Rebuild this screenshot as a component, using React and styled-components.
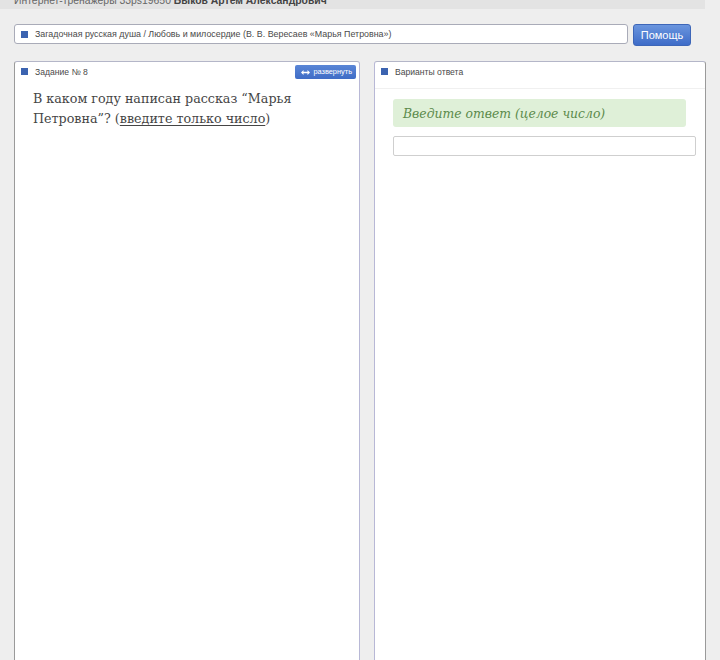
import React from 'react';
import styled, { createGlobalStyle } from 'styled-components';

const Global = createGlobalStyle`
  html, body {
    margin: 0;
    padding: 0;
    background: #eeeeee;
  }
`;

const Page = styled.div`
  width: 720px;
  height: 660px;
  overflow: hidden;
  background: #eeeeee;
  font-family: 'Liberation Sans', Arial, sans-serif;
  color: #444;
`;

const TopBar = styled.div`
  width: 691px;
  height: 9px;
  padding-left: 14px;
  background: #e3e3e3;
  overflow: hidden;
  font-size: 10.4px;
  line-height: 10px;
  color: #666;
  white-space: nowrap;
`;

const TopText = styled.div`
  margin-top: -4px;

  b {
    color: #444;
  }
`;

const Toolbar = styled.div`
  display: flex;
  align-items: flex-start;
  gap: 4px;
  margin-top: 15px;
  padding-left: 14px;
`;

const Crumbs = styled.div`
  width: 606px;
  height: 18px;
  display: flex;
  align-items: center;
  gap: 7px;
  padding-left: 6px;
  background: #fff;
  border: 1px solid #a9abb8;
  border-radius: 3px;
  font-size: 8.9px;
  color: #4a4a4a;
  white-space: nowrap;
`;

const Marker = styled.span`
  width: 7px;
  height: 7px;
  flex: none;
  background: #3b63b0;
`;

const HelpButton = styled.button`
  width: 58px;
  height: 22px;
  margin-left: 1px;
  padding: 0;
  border: 1px solid #3d66b8;
  border-radius: 3px;
  background: linear-gradient(#6a95de, #3e6cc8);
  color: #fff;
  font-family: 'Liberation Sans', Arial, sans-serif;
  font-size: 11px;
`;

const Columns = styled.div`
  display: flex;
  gap: 14px;
  margin-top: 15px;
  padding-left: 14px;
`;

const Panel = styled.div`
  width: ${p => p.$w}px;
  height: 640px;
  flex: none;
  background: #fff;
  border: 1px solid #b4b6c8;
  border-left-color: ${p => p.$leftEdge};
  border-right-color: ${p => p.$rightEdge};
  border-radius: 3px 3px 0 0;
`;

const PanelHead = styled.div`
  height: ${p => p.$h}px;
  display: flex;
  align-items: flex-start;
  gap: 7px;
  padding: 5px 3px 0 6px;
  box-sizing: border-box;
  border-bottom: ${p => (p.$line ? '1px solid #f0f0f0' : 'none')};
  font-size: 8.6px;
  line-height: 10px;
  color: #4a4a4a;

  ${Marker} {
    margin-top: 1px;
  }
`;

const HeadTitle = styled.span`
  flex: 1;
`;

const ExpandButton = styled.span`
  display: flex;
  align-items: center;
  gap: 3px;
  height: 14px;
  padding: 0 4px 0 6px;
  margin-top: -2px;
  background: linear-gradient(#5a86d6, #3f6cc6);
  border-radius: 2px;
  color: #fff;
  font-size: 7.4px;
`;

const Question = styled.p`
  margin: 7px 0 0 18px;
  padding-right: 40px;
  font-family: 'DejaVu Serif', 'Liberation Serif', serif;
  font-size: 12.7px;
  line-height: 19.5px;
  color: #454545;

  u {
    text-decoration-thickness: 1px;
    text-underline-offset: 2px;
  }
`;

const AnswerBody = styled.div`
  padding: 10px 8px 0 18px;
`;

const Hint = styled.div`
  width: 283px;
  height: 28px;
  padding-left: 10px;
  display: flex;
  align-items: center;
  background: #dff0d8;
  border-radius: 3px;
  font-family: 'DejaVu Serif', 'Liberation Serif', serif;
  font-style: italic;
  font-size: 12.4px;
  color: #5b8a4b;
`;

const AnswerInput = styled.input`
  display: block;
  width: 303px;
  height: 20px;
  margin-top: 9px;
  box-sizing: border-box;
  border: 1px solid #cfcfcf;
  border-radius: 2px;
  background: #fff;
`;

const Arrows = () => (
  <svg width="9" height="5" viewBox="0 0 9 5">
    <path d="M0 2.5 L2.5 0 V1.7 H6.5 V0 L9 2.5 L6.5 5 V3.3 H2.5 V5 Z" fill="#fff" />
  </svg>
);

export default function App() {
  return (
    <Page>
      <Global />
      <TopBar>
        <TopText>
          Интернет-тренажеры 33ps19650 <b>Быков Артем Александрович</b>
        </TopText>
      </TopBar>
      <Toolbar>
        <Crumbs>
          <Marker />
          Загадочная русская душа / Любовь и милосердие (В. В. Вересаев «Марья Петровна»)
        </Crumbs>
        <HelpButton>Помощь</HelpButton>
      </Toolbar>
      <Columns>
        <Panel $w={344} $leftEdge="#9a9a9a" $rightEdge="#b8b8d6">
          <PanelHead $h={20}>
            <Marker />
            <HeadTitle>Задание № 8</HeadTitle>
            <ExpandButton>
              <Arrows />
              развернуть
            </ExpandButton>
          </PanelHead>
          <Question>
            В каком году написан рассказ “Марья Петровна”? (<u>введите только число</u>)
          </Question>
        </Panel>
        <Panel $w={330} $leftEdge="#b8b8d6" $rightEdge="#9a9a9a">
          <PanelHead $h={27} $line>
            <Marker />
            <HeadTitle>Варианты ответа</HeadTitle>
          </PanelHead>
          <AnswerBody>
            <Hint>Введите ответ (целое число)</Hint>
            <AnswerInput />
          </AnswerBody>
        </Panel>
      </Columns>
    </Page>
  );
}
